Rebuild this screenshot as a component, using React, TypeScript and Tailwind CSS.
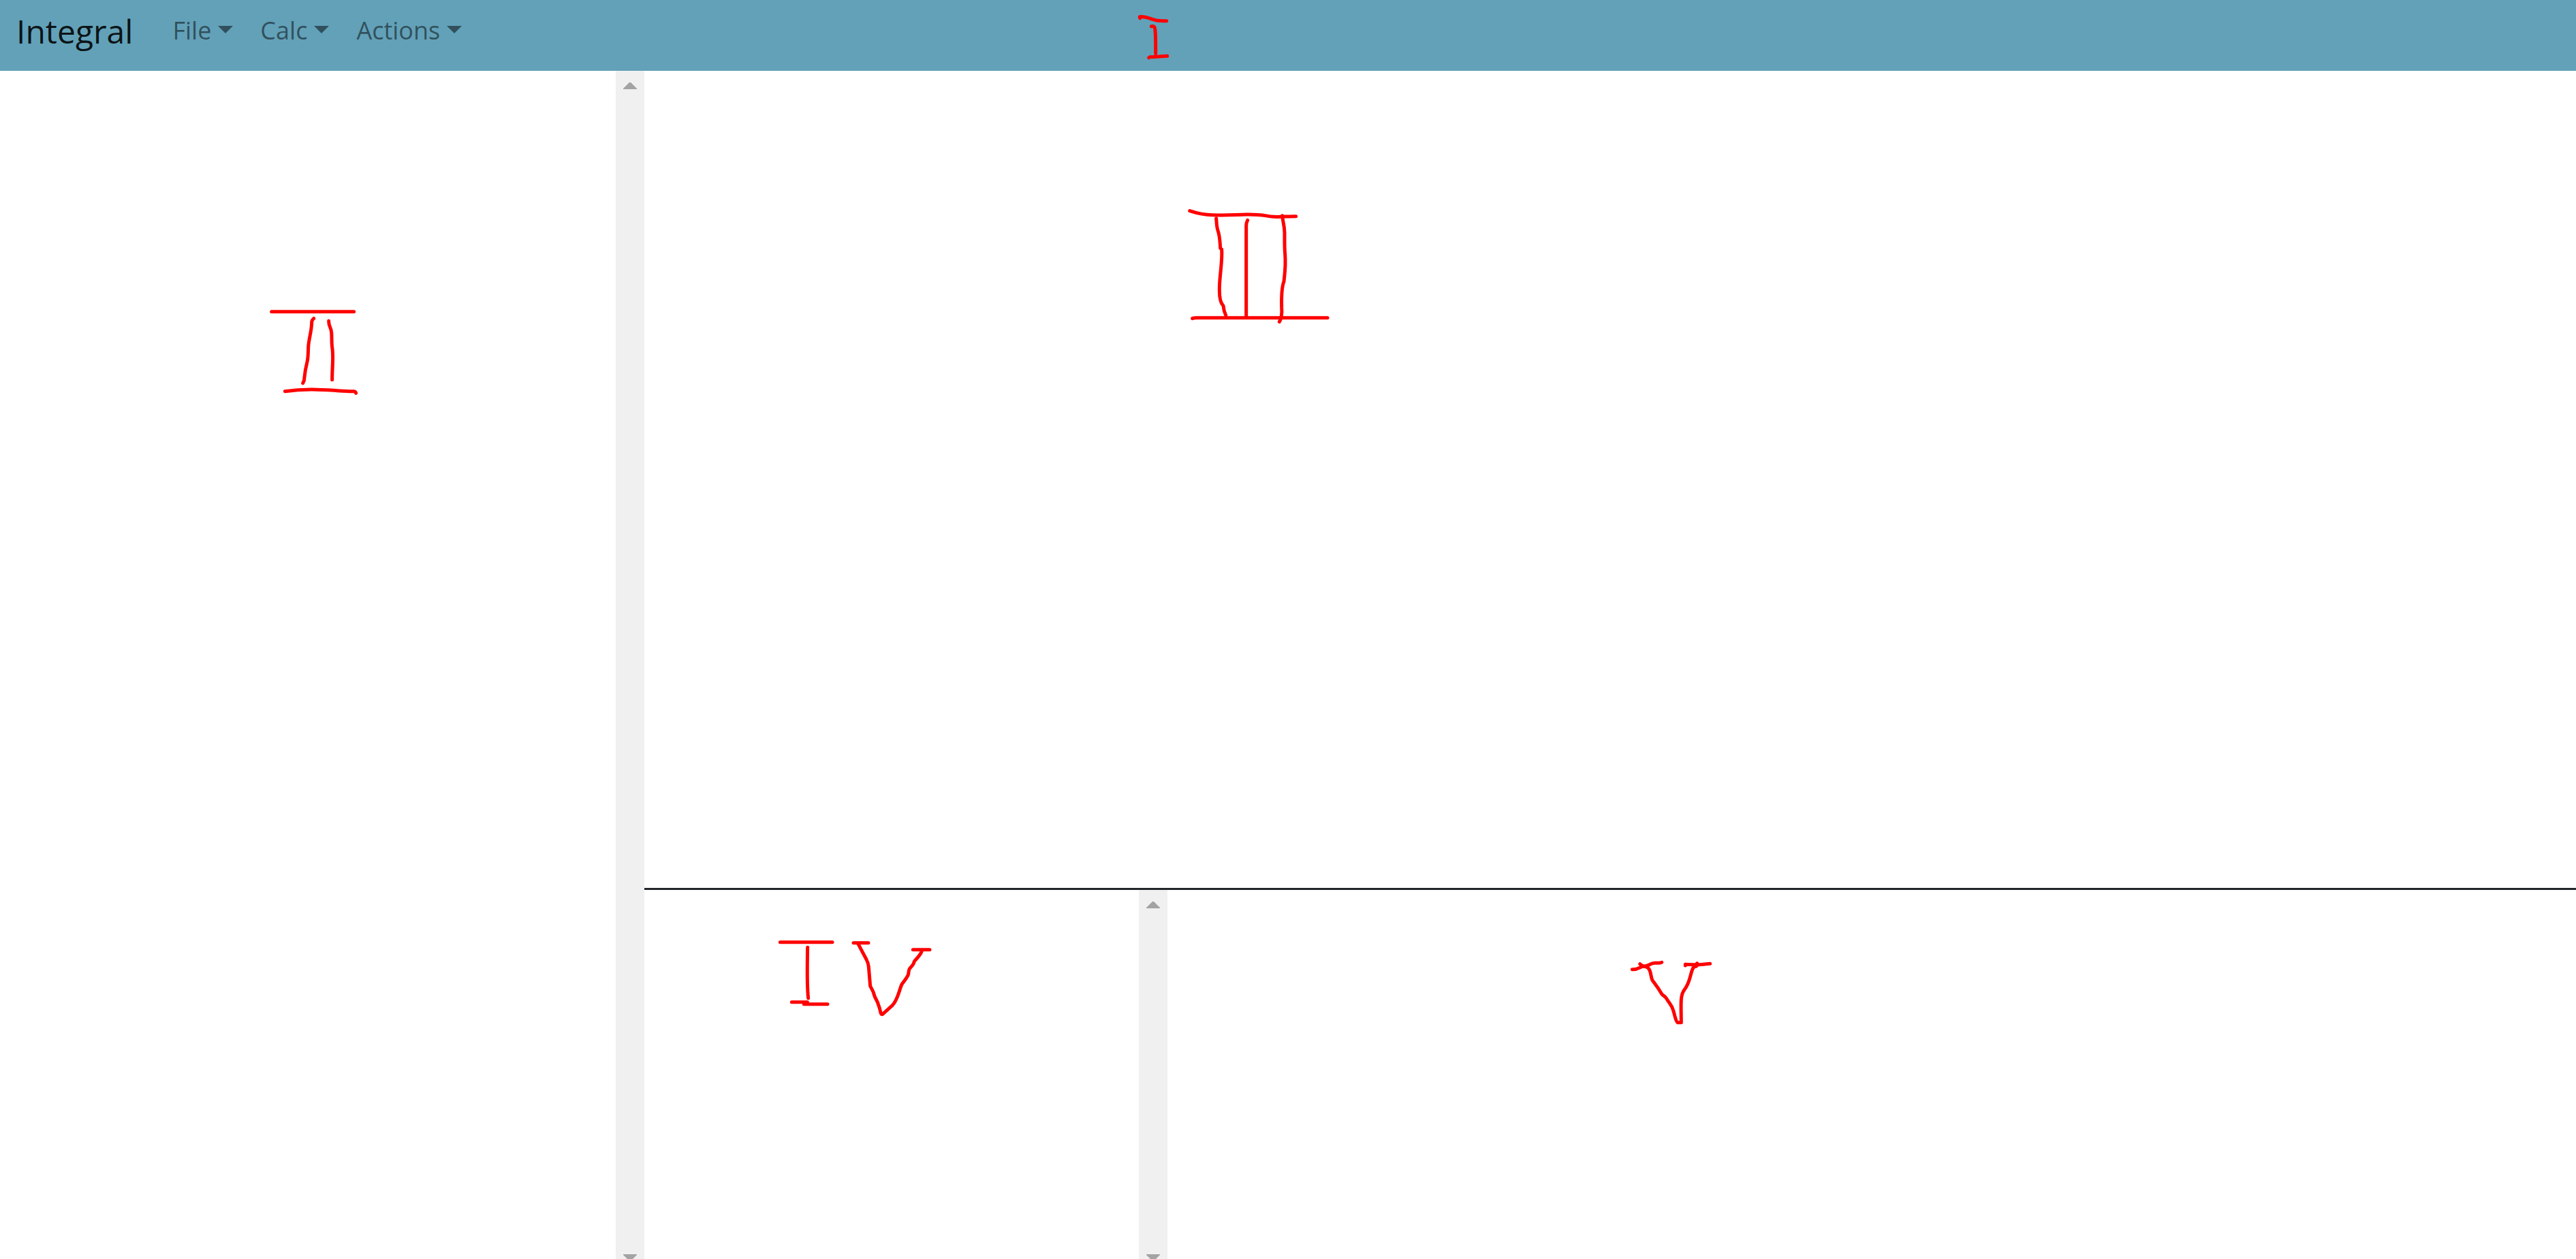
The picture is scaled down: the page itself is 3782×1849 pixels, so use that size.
import type { ReactNode } from "react";

const menus = ["File", "Calc", "Actions"];

function Mark({ label, viewBox, className, children }: { label: string; viewBox: string; className: string; children: ReactNode }) {
  return (
    <svg
      role="img"
      aria-label={label}
      viewBox={viewBox}
      fill="none"
      stroke="#ff0000"
      strokeWidth={15}
      strokeLinecap="round"
      strokeLinejoin="round"
      className={`pointer-events-none absolute ${className}`}
    >
      {children}
    </svg>
  );
}

function ScrollTrack() {
  return (
    <div className="flex w-[42px] shrink-0 flex-col items-center justify-between bg-[#f0f0f0] pt-[17px]" aria-hidden="true">
      <svg viewBox="0 0 20 10" className="h-[10px] w-5" fill="#a3a3a3">
        <path d="M0 10V9L9 0H11L20 9V10Z" />
      </svg>
      <svg viewBox="0 0 20 7" className="h-[7px] w-5" fill="#a3a3a3">
        <path d="M0 0H20V1L14 7H6L0 1Z" />
      </svg>
    </div>
  );
}

export default function App() {
  return (
    <div className="flex h-screen flex-col overflow-hidden bg-white font-['Open_Sans',sans-serif]">
      <nav className="relative flex h-[104px] shrink-0 items-start bg-[#62a1b8] pt-2 pl-6">
        <a href="#" className="mr-[58px] text-[48px] leading-[76px] text-black/90">
          Integral
        </a>
        <ul className="flex gap-10">
          {menus.map((name) => (
            <li key={name}>
              <button type="button" className="flex items-center gap-[10px] text-[36px] leading-[74px] text-black/50">
                {name}
                <svg viewBox="0 0 22 11" className="mb-[3px] h-[11px] w-[22px]" fill="currentColor" aria-hidden="true">
                  <path d="M0 0H22L11 11Z" />
                </svg>
              </button>
            </li>
          ))}
        </ul>
        <Mark label="I" viewBox="0 0 360 330" className="top-0 left-[1640px] h-[110px] w-[120px]">
          <path d="M101 80L100 74C125 71 148 84 175 90Q195 93 218 92" />
          <path d="M151 116C161 115 166 117 167 126C171 155 170 195 170 236" />
          <path d="M140 254Q144 250 153 251L221 247" />
        </Mark>
      </nav>

      <main className="grid min-h-0 flex-1 grid-cols-[1fr_3fr]">
        <section className="relative flex justify-end">
          <Mark label="II" viewBox="0 0 510 510" className="top-[326px] left-[380px] h-[170px] w-[170px]">
            <path d="M56 83H419" />
            <path d="M242 113Q234 120 233 128C234 165 219 205 218 240C217 275 217 290 213 304C200 355 201 380 199 387L194 398" />
            <path d="M308 124C307 148 319 155 320 174C322 200 320 220 323 240C330 285 323 320 323 383" />
            <path d="M115 434C210 420 285 427 345 431Q385 434 418 434Q426 434 428 442" />
          </Mark>
          <ScrollTrack />
        </section>

        <div className="grid min-h-0 grid-rows-[20fr_9fr]">
          <section className="relative border-b-3 border-[#212529]">
            <Mark label="III" viewBox="0 0 750 600" className="top-[186px] left-[774px] h-[200px] w-[250px]">
              <path d="M80 59C110 69 145 77 180 77C245 80 280 76 330 75C405 74 410 82 450 85C475 87 515 83 548 83" />
              <path d="M197 92C198 110 199 130 203 142C213 168 213 190 215 224L221 228C225 290 210 345 211 410C211 440 216 465 228 477C231 490 230 500 235 508L239 519" />
              <path d="M335 100Q329 111 329 125V527" />
              <path d="M488 80C489 103 497 120 498 155C498 190 497 220 500 250C504 305 498 340 495 370C483 400 484 445 485 485C487 510 486 530 475 548" />
              <path d="M92 533Q99 530 110 530H687" />
            </Mark>
          </section>

          <div className="grid min-h-0 grid-cols-[13fr_35fr]">
            <section className="relative flex justify-end">
              <Mark label="IV" viewBox="0 0 750 450" className="top-[53px] left-[184px] h-[150px] w-[250px]">
                <path d="M46 71H276" />
                <path d="M167 94C166 170 163 250 170 318" />
                <path d="M97 335H166M151 344H255" />
                <path d="M369 74H435M631 104H705" />
                <path d="M390 79L426 147Q435 165 436 180L443 264C450 280 458 288 460 303C465 321 475 330 479 347C489 370 485 377 491 387Q496 391 501 385L541 349C565 323 571 280 582 257C595 238 607 225 611 212C613 195 613 190 618 186C628 174 635 168 636 158C640 149 665 130 670 110" />
              </Mark>
              <ScrollTrack />
            </section>
            <section className="relative">
              <Mark label="V" viewBox="0 0 450 390" className="top-[83px] left-[666px] h-[130px] w-[150px]">
                <path d="M49 101C83 102 77 88 105 87C125 86 126 73 150 73C165 73 172 74 179 70" />
                <path d="M83 77Q93 87 108 89C135 97 128 130 138 149C153 169 163 181 179 209C184 217 193 218 199 228C215 255 225 259 231 285C239 312 240 328 249 335H265C265 260 259 218 278 192C305 158 301 133 316 97Q321 88 330 88Q336 86 335 74" />
                <path d="M283 84V79C315 80 345 82 370 78L392 76" />
              </Mark>
            </section>
          </div>
        </div>
      </main>
    </div>
  );
}
